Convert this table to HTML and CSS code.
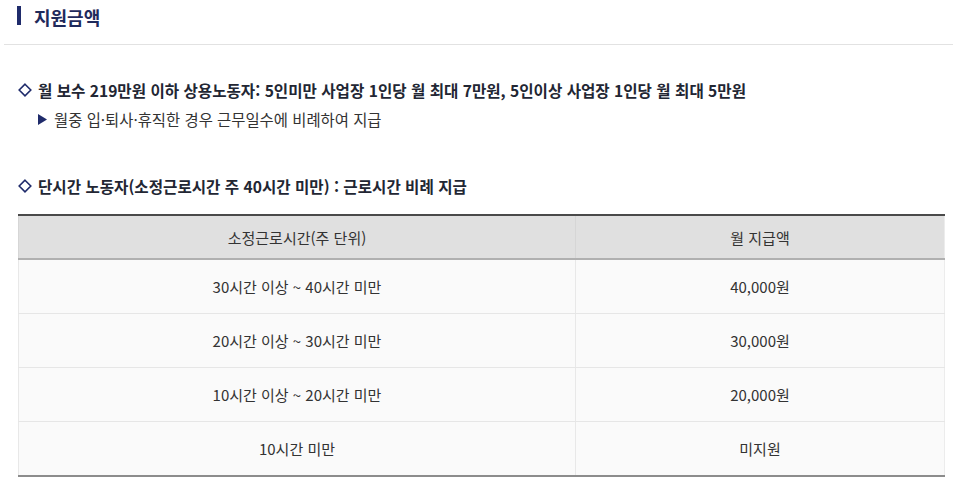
FILE: index.html
```html
<!DOCTYPE html>
<html lang="ko">
<head>
<meta charset="utf-8">
<link rel="stylesheet" href="styles.css">
</head>
<body>
<div class="heading"><span class="bar"></span><h2>지원금액</h2></div>
<div class="content">
  <p class="item"><svg class="dia" width="14" height="14" viewBox="0 0 14 14"><path d="M7 1.2 L12.8 7 L7 12.8 L1.2 7 Z" fill="none" stroke="#1f2b6b" stroke-width="1.6"/></svg><span>월 보수 219만원 이하 상용노동자: 5인미만 사업장 1인당 월 최대 7만원, 5인이상 사업장 1인당 월 최대 5만원</span></p>
  <p class="sub"><svg class="tri" width="9" height="11" viewBox="0 0 9 11"><path d="M0 0 L9 5.5 L0 11 Z" fill="#1f2b6b"/></svg><span>월중 입·퇴사·휴직한 경우 근무일수에 비례하여 지급</span></p>
  <p class="item item2"><svg class="dia" width="14" height="14" viewBox="0 0 14 14"><path d="M7 1.2 L12.8 7 L7 12.8 L1.2 7 Z" fill="none" stroke="#1f2b6b" stroke-width="1.6"/></svg><span>단시간 노동자(소정근로시간 주 40시간 미만) : 근로시간 비례 지급</span></p>
  <table class="pay">
    <thead>
      <tr><th class="c1">소정근로시간(주 단위)</th><th>월 지급액</th></tr>
    </thead>
    <tbody>
      <tr><td class="c1">30시간 이상 ~ 40시간 미만</td><td>40,000원</td></tr>
      <tr><td class="c1">20시간 이상 ~ 30시간 미만</td><td>30,000원</td></tr>
      <tr><td class="c1">10시간 이상 ~ 20시간 미만</td><td>20,000원</td></tr>
      <tr><td class="c1">10시간 미만</td><td>미지원</td></tr>
    </tbody>
  </table>
</div>
</body>
</html>
```

FILE: styles.css
```css
html, body {
  margin: 0;
  padding: 0;
  background: #ffffff;
}
body {
  font-family: "Noto Sans CJK KR", "Noto Sans", sans-serif;
  color: #333;
}
.heading {
  margin-left: 4px;
  height: 44px;
  border-bottom: 1px solid #e2e2e2;
  display: flex;
  align-items: flex-start;
  padding-left: 13px;
}
.heading .bar {
  display: block;
  width: 4px;
  height: 19px;
  margin-top: 6px;
  background: #1f2b6b;
}
.heading h2 {
  margin: 0 0 0 13px;
  font-size: 18px;
  line-height: 34px;
  font-weight: 700;
  color: #1f2a5c;
}
.content {
  padding: 0 8px 0 18px;
}
.item {
  margin: 34px 0 0;
  display: flex;
  align-items: center;
  font-size: 15.6px;
  line-height: 22px;
  font-weight: 700;
  color: #222633;
}
.item .dia {
  margin-right: 6px;
  flex: none;
}
.item2 {
  margin-top: 45px;
}
.sub {
  margin: 7px 0 0 20px;
  display: flex;
  align-items: center;
  font-size: 15.4px;
  line-height: 22px;
  color: #333;
}
.sub .tri {
  margin-right: 7px;
  flex: none;
}
.pay {
  margin-top: 17px;
  width: 927px;
  border-collapse: collapse;
  font-size: 15px;
  color: #333;
  border-top: 2px solid #4a4a4a;
  border-bottom: 2px solid #8c8c8c;
  border-left: 1px solid #ececec;
  border-right: 1px solid #ececec;
}
.pay th {
  background: #e0e0e0;
  font-weight: 400;
  height: 42px;
  padding: 0;
  border-bottom: 2px solid #b0b0b0;
  border-left: 1px solid #d6d6d6;
}
.pay td {
  background: #fafafa;
  height: 53px;
  padding: 0;
  text-align: center;
  border-bottom: 1px solid #e6e6e6;
  border-left: 1px solid #e8e8e8;
}
.pay .c1 {
  width: 556px;
}
.pay tbody tr:last-child td {
  border-bottom: none;
}
```
